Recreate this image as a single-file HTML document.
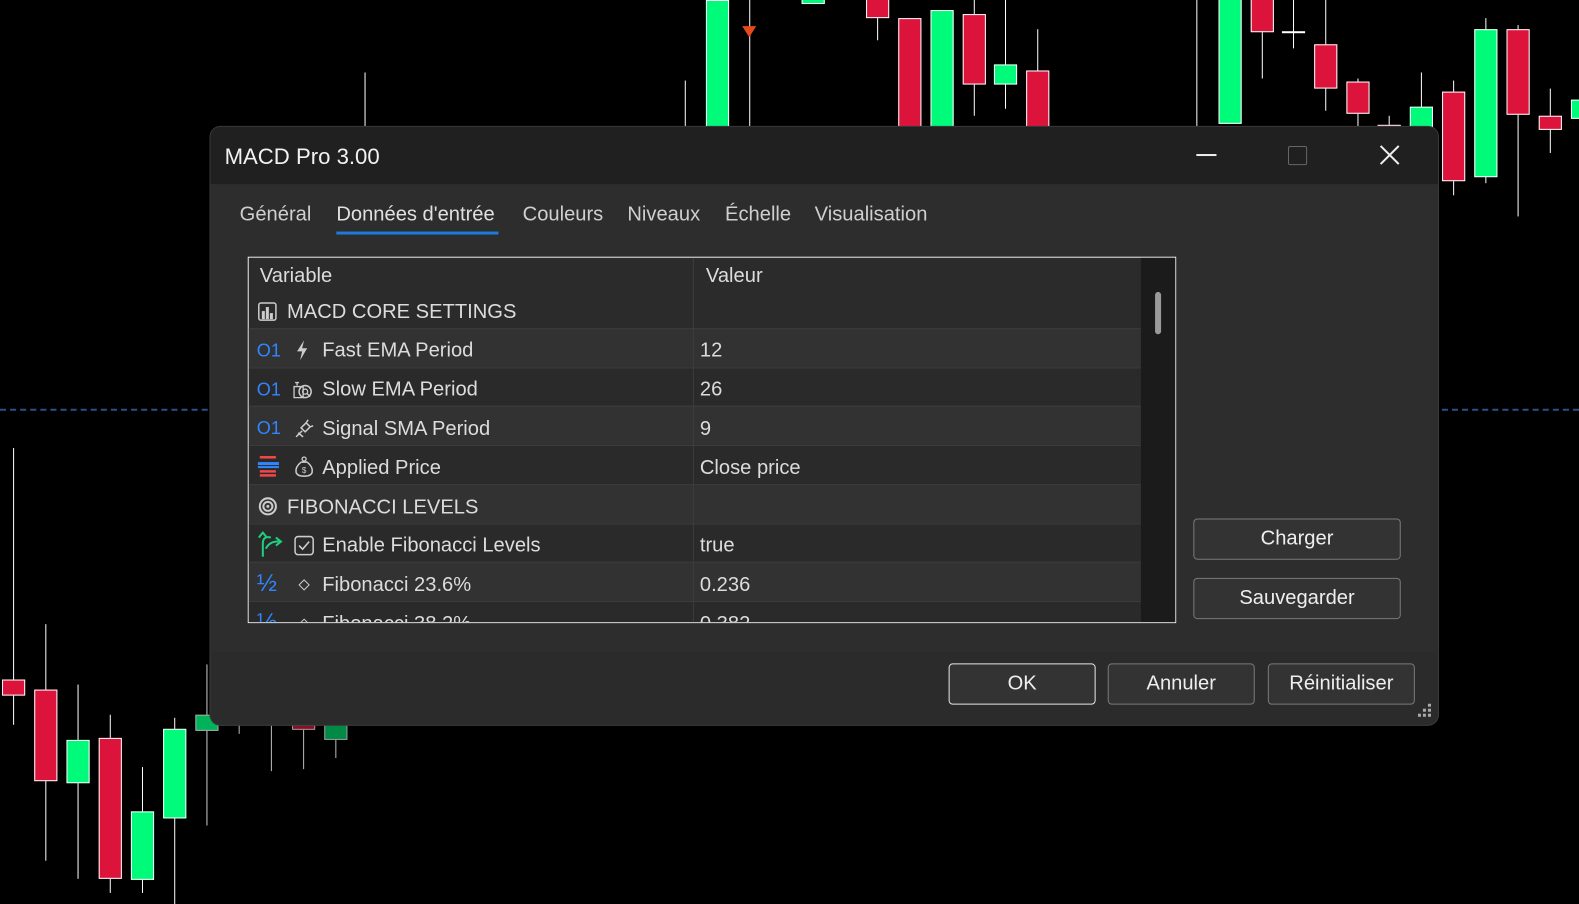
<!DOCTYPE html>
<html><head><meta charset="utf-8"><style>
html,body{margin:0;padding:0;background:#000;overflow:hidden;width:1579px;height:904px}
#w{position:absolute;left:0;top:0;width:1568px;height:898px;transform:scale(1.00702,1.00668);transform-origin:0 0;font-family:"Liberation Sans",sans-serif}
.a{position:absolute}
.wk{position:absolute;width:1px;background:#fff}
.g{position:absolute;background:#00fa7a;border:1px solid #fff;box-sizing:border-box}
.r{position:absolute;background:#dc143c;border:1px solid #fff;box-sizing:border-box}
.t{position:absolute;color:#dcdcdc;font-size:20px;white-space:nowrap}
.row{position:absolute;left:0;width:886px;height:39px;border-top:1px solid #3d3d3d;box-sizing:border-box}
.btn{position:absolute;border:1px solid #7a7a7a;border-radius:4px;background:#333;color:#eee;font-size:20px;text-align:center;box-sizing:border-box}
.blue{color:#2f86ff;font-size:18px}
</style></head><body><div id="w">
<div class="a" style="left:0;top:406px;width:1568px;height:0;border-top:2px dashed #2d4f8a"></div>
<div class="wk" style="left:362px;top:72px;height:60px"></div>
<div class="wk" style="left:680px;top:80px;height:50px"></div>
<div class="g" style="left:701px;top:0;width:23px;height:130px"></div>
<div class="wk" style="left:744px;top:0;height:130px"></div>
<div class="a" style="left:737px;top:26px;width:0;height:0;border-left:7px solid transparent;border-right:7px solid transparent;border-top:11px solid #e8481c"></div>
<div class="g" style="left:796px;top:-2px;width:23px;height:6px"></div>
<div class="wk" style="left:871px;top:0;height:40px"></div>
<div class="r" style="left:860px;top:-2px;width:23px;height:20px"></div>
<div class="r" style="left:892px;top:18px;width:23px;height:112px"></div>
<div class="g" style="left:924px;top:10px;width:23px;height:120px"></div>
<div class="wk" style="left:967px;top:0;height:115px"></div>
<div class="r" style="left:956px;top:14px;width:23px;height:70px"></div>
<div class="wk" style="left:998px;top:0;height:108px"></div>
<div class="g" style="left:987px;top:64px;width:23px;height:20px"></div>
<div class="wk" style="left:1030px;top:29px;height:60px"></div>
<div class="r" style="left:1019px;top:70px;width:23px;height:60px"></div>
<div class="wk" style="left:1188px;top:0;height:130px"></div>
<div class="g" style="left:1210px;top:-2px;width:23px;height:125px"></div>
<div class="wk" style="left:1253px;top:0;height:78px"></div>
<div class="r" style="left:1242px;top:-2px;width:23px;height:34px"></div>
<div class="wk" style="left:1284px;top:0;height:48px"></div>
<div class="a" style="left:1273px;top:31px;width:23px;height:2px;background:#fff"></div>
<div class="wk" style="left:1316px;top:0;height:110px"></div>
<div class="r" style="left:1305px;top:44px;width:23px;height:44px"></div>
<div class="wk" style="left:1348px;top:78px;height:50px"></div>
<div class="r" style="left:1337px;top:81px;width:23px;height:32px"></div>
<div class="wk" style="left:1379px;top:115px;height:20px"></div>
<div class="r" style="left:1368px;top:124px;width:23px;height:10px"></div>
<div class="wk" style="left:1411px;top:72px;height:40px"></div>
<div class="g" style="left:1400px;top:106px;width:23px;height:30px"></div>
<div class="wk" style="left:1443px;top:80px;height:114px"></div>
<div class="r" style="left:1432px;top:91px;width:23px;height:89px"></div>
<div class="wk" style="left:1475px;top:18px;height:164px"></div>
<div class="g" style="left:1464px;top:29px;width:23px;height:147px"></div>
<div class="wk" style="left:1507px;top:25px;height:190px"></div>
<div class="r" style="left:1496px;top:29px;width:23px;height:85px"></div>
<div class="wk" style="left:1539px;top:88px;height:64px"></div>
<div class="r" style="left:1528px;top:115px;width:23px;height:14px"></div>
<div class="g" style="left:1560px;top:99px;width:20px;height:19px"></div>
<div class="wk" style="left:13px;top:445px;height:275px"></div>
<div class="r" style="left:2px;top:675px;width:23px;height:16px"></div>
<div class="wk" style="left:45px;top:620px;height:235px"></div>
<div class="r" style="left:34px;top:685px;width:23px;height:91px"></div>
<div class="wk" style="left:77px;top:680px;height:193px"></div>
<div class="g" style="left:66px;top:735px;width:23px;height:43px"></div>
<div class="wk" style="left:109px;top:710px;height:177px"></div>
<div class="r" style="left:98px;top:733px;width:23px;height:140px"></div>
<div class="wk" style="left:141px;top:762px;height:125px"></div>
<div class="g" style="left:130px;top:806px;width:23px;height:68px"></div>
<div class="wk" style="left:173px;top:713px;height:185px"></div>
<div class="g" style="left:162px;top:724px;width:23px;height:89px"></div>
<div class="wk" style="left:205px;top:660px;height:160px;background:#ccc"></div>
<div class="g" style="left:194px;top:710px;width:23px;height:16px;background:#00b35a;border-color:#aaa"></div>
<div class="wk" style="left:237px;top:720px;height:9px;background:#bbb"></div>
<div class="wk" style="left:269px;top:720px;height:46px;background:#bbb"></div>
<div class="wk" style="left:301px;top:720px;height:44px;background:#bbb"></div>
<div class="a" style="left:290px;top:720px;width:23px;height:5px;background:#8a0f25;border:1px solid #999;box-sizing:border-box"></div>
<div class="wk" style="left:333px;top:720px;height:33px;background:#bbb"></div>
<div class="a" style="left:322px;top:718px;width:23px;height:17px;background:#008a45;border:1px solid #999;box-sizing:border-box"></div>
<div class="a" style="left:209px;top:126px;width:1219px;height:594px;background:#2b2b2b;border-radius:10px;overflow:hidden;box-shadow:0 0 0 1px #3a3a3a">
 <div class="a" style="left:0;top:0;width:1219px;height:57px;background:#202020"></div>
 <div class="t" style="left:14px;top:17px;font-size:22px;color:#f2f2f2">MACD Pro 3.00</div>
 <div class="a" style="left:979px;top:27px;width:20px;height:2px;background:#eee"></div>
 <div class="a" style="left:1070px;top:19px;width:17px;height:17px;border:1.5px solid #666;border-radius:2px"></div>
 <svg class="a" style="left:1160px;top:17px" width="22" height="22"><path d="M2 2L20 20M20 2L2 20" stroke="#eee" stroke-width="2"/></svg>
 <div class="a" style="left:0;top:57px;width:1219px;height:465px;background:#2d2d2d"></div>
 <div class="t" style="left:29px;top:76px;color:#cfcfcf">Général</div>
 <div class="t" style="left:125px;top:76px;color:#e0e0e0">Données d'entrée</div>
 <div class="a" style="left:125px;top:104px;width:161px;height:3px;background:#1e7ad8"></div>
 <div class="t" style="left:310px;top:76px;color:#cfcfcf">Couleurs</div>
 <div class="t" style="left:414px;top:76px;color:#cfcfcf">Niveaux</div>
 <div class="t" style="left:511px;top:76px;color:#cfcfcf">Échelle</div>
 <div class="t" style="left:600px;top:76px;color:#cfcfcf">Visualisation</div>
 <div class="a" style="left:37px;top:129px;width:922px;height:364px;border:1.5px solid #eee;box-sizing:border-box;background:#2b2b2b;overflow:hidden">
  <div class="a" style="left:0;top:0;width:886px;height:400px">
   <div class="t" style="left:11px;top:7px">Variable</div>
   <div class="t" style="left:454px;top:7px">Valeur</div>
   <div class="row" style="top:70px;background:#323232"></div>
   <div class="row" style="top:109px;background:#2a2a2a"></div>
   <div class="row" style="top:147px;background:#323232"></div>
   <div class="row" style="top:186px;background:#2a2a2a"></div>
   <div class="row" style="top:225px;background:#323232"></div>
   <div class="row" style="top:264px;background:#2a2a2a"></div>
   <div class="row" style="top:302px;background:#323232"></div>
   <div class="row" style="top:341px;background:#2a2a2a"></div>
   <div class="a" style="left:441px;top:0;width:1px;height:400px;background:#3d3d3d"></div>
   <svg class="a" style="left:9px;top:44px" width="20" height="20"><rect x="1" y="1" width="17" height="17" rx="2" fill="none" stroke="#ccc" stroke-width="1.5"/><rect x="4" y="9" width="3" height="8" fill="#ccc"/><rect x="8" y="5" width="3" height="12" fill="#ccc"/><rect x="12" y="11" width="3" height="6" fill="#ccc"/></svg>
   <div class="t" style="left:38px;top:43px">MACD CORE SETTINGS</div>
   <div class="t blue" style="left:8px;top:82px">O1</div>
   <svg class="a" style="left:47px;top:82px" width="12" height="20"><path d="M8 0L1 11H6L4 20L11 8H6Z" fill="#ccc"/></svg>
   <div class="t" style="left:73px;top:81px">Fast EMA Period</div><div class="t" style="left:448px;top:81px">12</div>
   <div class="t blue" style="left:8px;top:121px">O1</div>
   <svg class="a" style="left:43px;top:121px" width="22" height="20"><path d="M3 3h4M5 3v3M2 7h9v11H2z" fill="none" stroke="#ccc" stroke-width="1.3"/><circle cx="13" cy="12" r="6" fill="none" stroke="#ccc" stroke-width="1.5"/><circle cx="13" cy="12" r="2.5" fill="none" stroke="#ccc" stroke-width="1.3"/><path d="M15 14l3 3" stroke="#ccc" stroke-width="1.3"/></svg>
   <div class="t" style="left:73px;top:120px">Slow EMA Period</div><div class="t" style="left:448px;top:120px">26</div>
   <div class="t blue" style="left:8px;top:159px">O1</div>
   <svg class="a" style="left:45px;top:160px" width="20" height="20"><path d="M2 18L8 12M4 14l5 4M7 9l5-5 4 4-5 5z M12 4l2-3 M16 8l3-1" fill="none" stroke="#ccc" stroke-width="1.5"/></svg>
   <div class="t" style="left:73px;top:159px">Signal SMA Period</div><div class="t" style="left:448px;top:159px">9</div>
   <svg class="a" style="left:9px;top:196px" width="22" height="22"><rect x="2" y="1" width="16" height="2.5" fill="#f04848"/><rect x="0" y="7" width="21" height="3" fill="#2f86ff"/><rect x="0" y="11" width="21" height="2" fill="#2f86ff"/><rect x="2" y="15" width="16" height="2.5" fill="#f04848"/><rect x="2" y="19" width="16" height="2.5" fill="#f04848"/></svg>
   <svg class="a" style="left:45px;top:197px" width="20" height="22"><circle cx="10" cy="3" r="2" fill="none" stroke="#ccc" stroke-width="1.3"/><path d="M7 6h6M7 6Q1 11 2 16Q3 20 10 20Q17 20 18 16Q19 11 13 6" fill="none" stroke="#ccc" stroke-width="1.5"/><text x="10" y="17" font-size="8" fill="#ccc" text-anchor="middle" font-family="Liberation Sans">$</text></svg>
   <div class="t" style="left:73px;top:198px">Applied Price</div><div class="t" style="left:448px;top:198px">Close price</div>
   <svg class="a" style="left:9px;top:237px" width="20" height="20"><circle cx="10" cy="10" r="8" fill="none" stroke="#ccc" stroke-width="2"/><circle cx="10" cy="10" r="4.5" fill="none" stroke="#ccc" stroke-width="2"/><circle cx="10" cy="10" r="1.5" fill="#ccc"/></svg>
   <div class="t" style="left:38px;top:237px">FIBONACCI LEVELS</div>
   <svg class="a" style="left:7px;top:272px" width="28" height="26"><path d="M7 25V12Q7 4 15 6M3 6L7 1L11 6M10 17Q14 9 24 10M20 6L25 10L20 14" fill="none" stroke="#1fcf7f" stroke-width="2"/></svg>
   <svg class="a" style="left:45px;top:276px" width="20" height="20"><rect x="1" y="1" width="18" height="18" rx="3" fill="none" stroke="#ccc" stroke-width="1.5"/><path d="M5 10L8.5 13.5L15 6" fill="none" stroke="#ccc" stroke-width="1.6"/></svg>
   <div class="t" style="left:73px;top:275px">Enable Fibonacci Levels</div><div class="t" style="left:448px;top:275px">true</div>
   <div class="t" style="left:8px;top:310px;color:#2f86ff;font-size:24px">½</div>
   <div class="a" style="left:51px;top:321px;width:6px;height:6px;border:1px solid #ccc;transform:rotate(45deg)"></div>
   <div class="t" style="left:73px;top:314px">Fibonacci 23.6%</div><div class="t" style="left:448px;top:314px">0.236</div>
   <div class="t" style="left:8px;top:349px;color:#2f86ff;font-size:24px">½</div>
   <div class="a" style="left:51px;top:360px;width:6px;height:6px;border:1px solid #ccc;transform:rotate(45deg)"></div>
   <div class="t" style="left:73px;top:353px">Fibonacci 38.2%</div><div class="t" style="left:448px;top:353px">0.382</div>
  </div>
  <div class="a" style="left:886px;top:0;width:36px;height:364px;background:#1b1b1b"></div>
  <div class="a" style="left:900px;top:34px;width:6px;height:42px;background:#9a9a9a;border-radius:3px"></div>
 </div>
 <div class="btn" style="left:976px;top:389px;width:206px;height:41px;line-height:39px">Charger</div>
 <div class="btn" style="left:976px;top:448px;width:206px;height:41px;line-height:39px">Sauvegarder</div>
 <div class="btn" style="left:733px;top:533px;width:146px;height:41px;line-height:39px;border-color:#e8e8e8">OK</div>
 <div class="btn" style="left:891px;top:533px;width:146px;height:41px;line-height:39px">Annuler</div>
 <div class="btn" style="left:1050px;top:533px;width:146px;height:41px;line-height:39px">Réinitialiser</div>
 <svg class="a" style="left:1199px;top:573px" width="14" height="14"><g fill="#aaa"><rect x="10" y="0" width="3" height="3"/><rect x="5" y="5" width="3" height="3"/><rect x="10" y="5" width="3" height="3"/><rect x="0" y="10" width="3" height="3"/><rect x="5" y="10" width="3" height="3"/><rect x="10" y="10" width="3" height="3"/></g></svg>
</div>
</div></body></html>
